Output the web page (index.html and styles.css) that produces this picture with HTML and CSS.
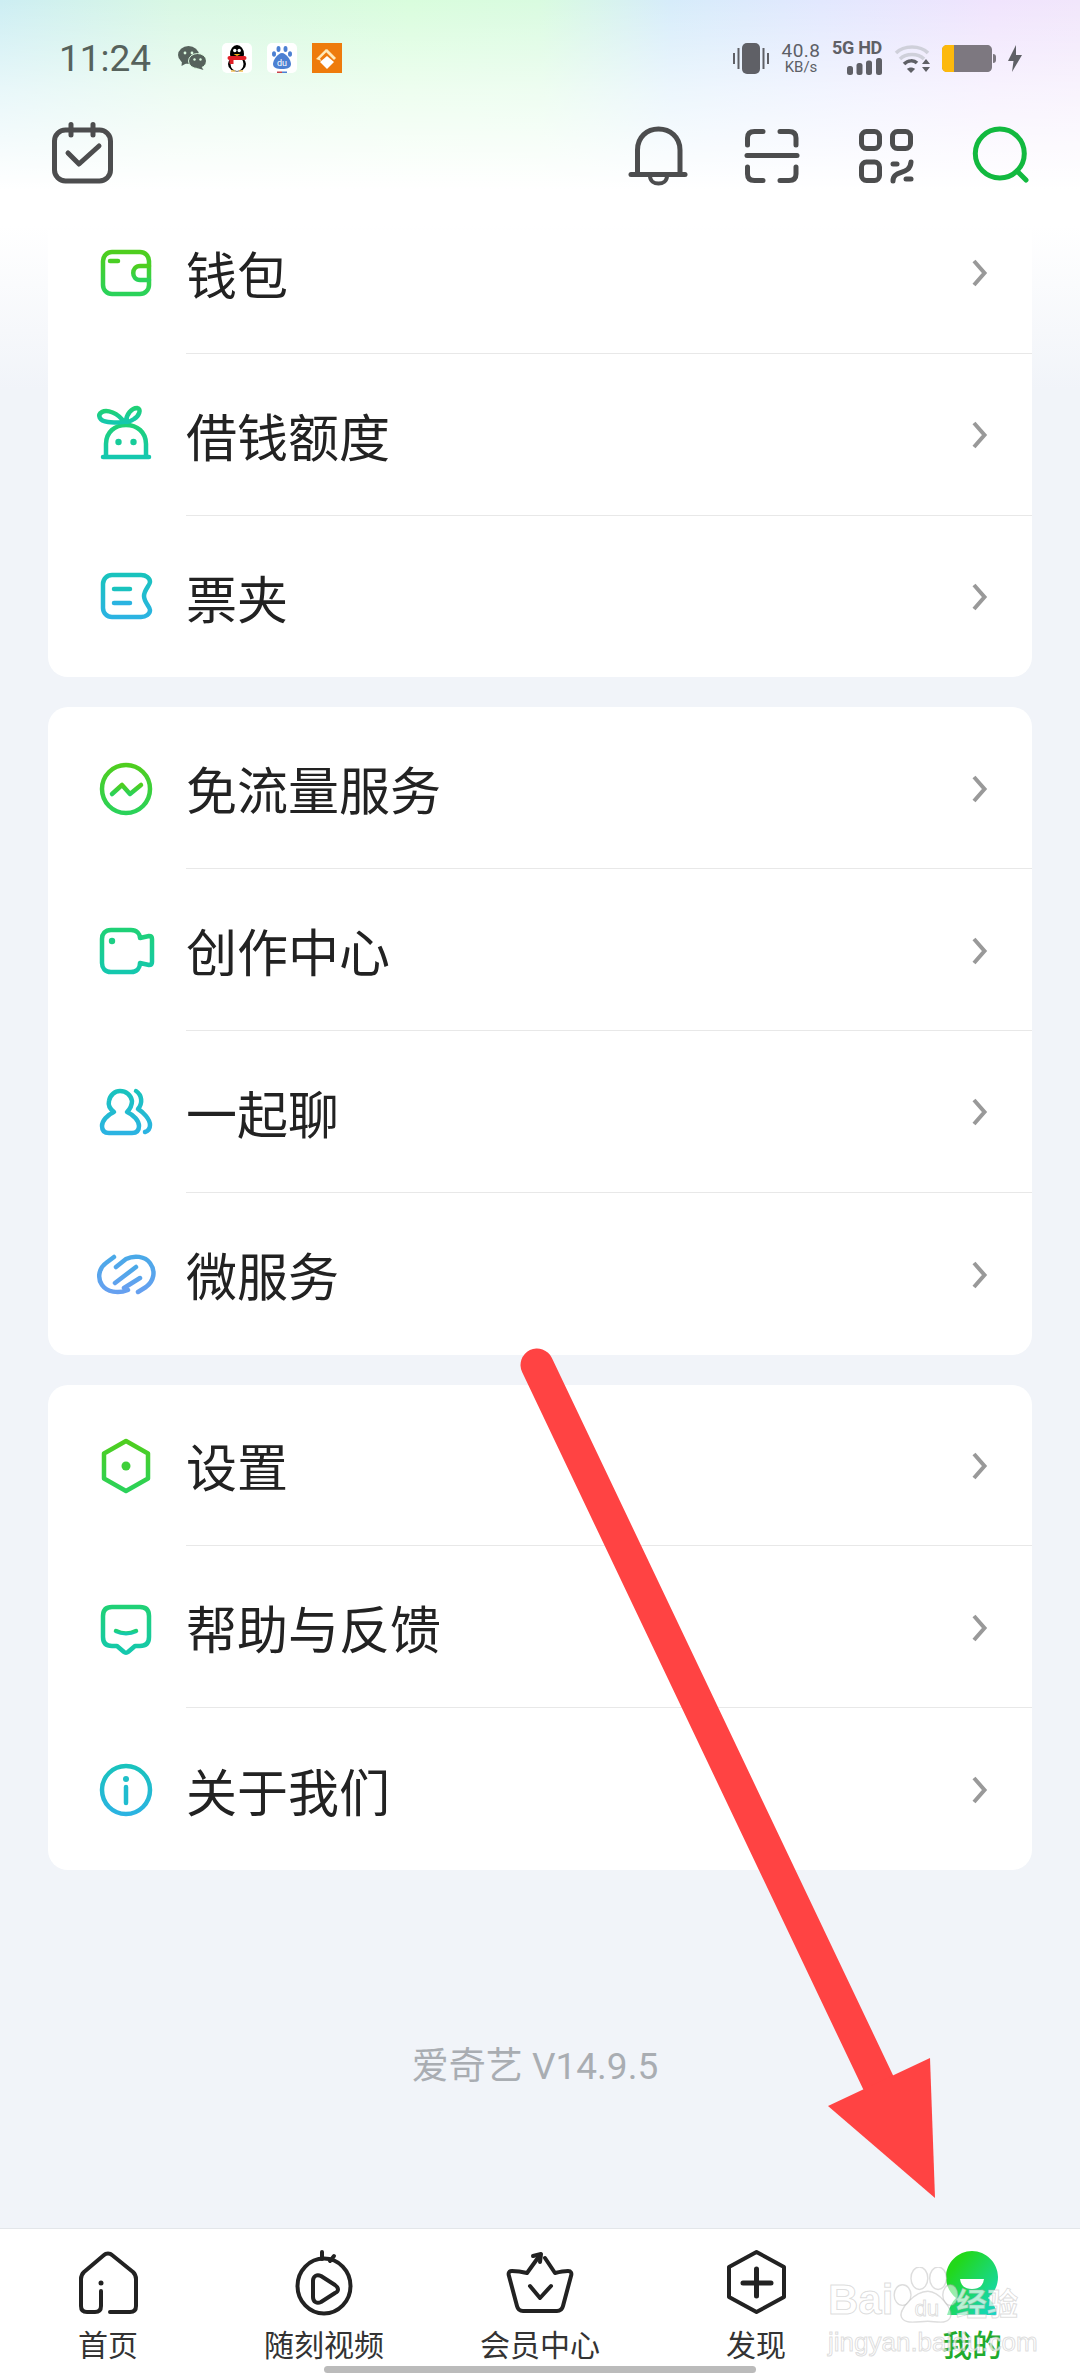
FILE: index.html
```html
<!DOCTYPE html>
<html lang="zh-CN">

<head>
    <meta charset="UTF-8">
    <meta name="viewport" content="width=device-width, initial-scale=1.0">
    <title>爱奇艺 - 我的</title>
    <link rel="stylesheet" href="styles.css">
</head>

<body>
    <svg class="defs" width="0" height="0">
        <defs>
            <linearGradient id="g-green" x1="0" y1="0" x2="0" y2="1">
                <stop offset="0" stop-color="#4fce1e" />
                <stop offset="1" stop-color="#2ad25a" />
            </linearGradient>
            <linearGradient id="g-teal" x1="0" y1="0" x2="0" y2="1">
                <stop offset="0" stop-color="#1fd176" />
                <stop offset="1" stop-color="#14c8ae" />
            </linearGradient>
            <linearGradient id="g-cyan" x1="0" y1="0" x2="0" y2="1">
                <stop offset="0" stop-color="#19c3bd" />
                <stop offset="1" stop-color="#2bb3e2" />
            </linearGradient>
            <linearGradient id="g-blue" x1="0" y1="0" x2="0" y2="1">
                <stop offset="0" stop-color="#4aa9e8" />
                <stop offset="1" stop-color="#66a0f0" />
            </linearGradient>
            <linearGradient id="g-mine" x1="0" y1="0" x2="1" y2="1">
                <stop offset="0.2" stop-color="#22d81a" />
                <stop offset="1" stop-color="#12d8d0" />
            </linearGradient>
        </defs>
    </svg>

    <div class="app">
        <header class="header">
            <div class="status-bar">
                <span class="time">11:24</span>
                <div class="notify-icons">
                    <svg class="wechat" width="28" height="24" viewBox="0 0 28 24">
                        <ellipse cx="10.5" cy="9" rx="10.5" ry="9" fill="#56625c" />
                        <path d="M4 15 L3.5 20 L9 17Z" fill="#56625c" />
                        <ellipse cx="19.5" cy="15" rx="9" ry="7.5" fill="#56625c" stroke="#dcfbe0" stroke-width="1" />
                        <path d="M23 20 L25.5 24 L19 22Z" fill="#56625c" />
                        <circle cx="7" cy="7" r="1.4" fill="#dcfbe0" />
                        <circle cx="14" cy="7" r="1.4" fill="#dcfbe0" />
                        <circle cx="16.5" cy="13.5" r="1.2" fill="#dcfbe0" />
                        <circle cx="22.5" cy="13.5" r="1.2" fill="#dcfbe0" />
                    </svg>
                    <svg width="30" height="30" viewBox="0 0 30 30">
                        <rect width="30" height="30" rx="5" fill="#fff" />
                        <ellipse cx="15" cy="11" rx="7" ry="9" fill="#000" />
                        <ellipse cx="15" cy="21" rx="9" ry="7.5" fill="#000" />
                        <ellipse cx="15" cy="21" rx="6.5" ry="7" fill="#fff" />
                        <rect x="5.5" y="13" width="19" height="4" rx="2" fill="#e01f26" />
                        <rect x="7.5" y="15" width="4" height="6" fill="#e01f26" />
                        <circle cx="12.8" cy="7.5" r="1.7" fill="#fff" />
                        <circle cx="17.2" cy="7.5" r="1.7" fill="#fff" />
                        <path d="M11.5 11 H18.5 L15 13Z" fill="#f6b21a" />
                        <path d="M9 28 H13 M17 28 H21" stroke="#f3c45a" stroke-width="1.5" />
                    </svg>
                    <svg width="30" height="30" viewBox="0 0 30 30">
                        <rect width="30" height="30" rx="5" fill="#fff" />
                        <ellipse cx="11.5" cy="6" rx="2" ry="3" fill="#4c80d2" />
                        <ellipse cx="18.5" cy="6" rx="2" ry="3" fill="#4c80d2" />
                        <ellipse cx="7" cy="11" rx="2" ry="2.8" fill="#4c80d2" />
                        <ellipse cx="23" cy="11" rx="2" ry="2.8" fill="#4c80d2" />
                        <path d="M15 10 C19 10 24 17 24 21 C24 25 20 26 15 26 C10 26 6 25 6 21 C6 17 11 10 15 10Z" fill="#4c80d2" />
                        <text class="du-mini" x="15" y="23" text-anchor="middle">du</text>
                        <rect x="10" y="28.5" width="5" height="1.5" fill="#c9434a" />
                        <rect x="15" y="28.5" width="5" height="1.5" fill="#4c80d2" />
                    </svg>
                    <svg width="30" height="30" viewBox="0 0 30 30">
                        <rect width="30" height="30" fill="#ee7b0c" />
                        <path d="M4 16 L14 6 L15.5 8 L8 15.5 L9.5 18Z" fill="#ffe9b8" />
                        <path d="M15 6 L24 15 L22 17 L13 8Z" fill="#ffe9b8" />
                        <path d="M15 13 L22 19 L15 26 L8 19Z" fill="#fff" />
                    </svg>
                </div>
                <div class="sys-icons">
                    <svg width="36" height="31" viewBox="0 0 36 31" fill="#5f6066">
                        <rect x="9" width="18" height="31" rx="5" />
                        <rect x="4.5" y="5" width="2" height="21" />
                        <rect x="0" y="10" width="2" height="11" />
                        <rect x="29.5" y="5" width="2" height="21" />
                        <rect x="34" y="10" width="2" height="11" />
                    </svg>
                    <div class="speed">
                        <span class="speed-num">40.8</span>
                        <span class="speed-unit">KB/s</span>
                    </div>
                    <div class="network">
                        <span class="net-label">5G HD</span>
                        <svg width="35" height="17" viewBox="0 0 35 17" fill="#5f6066">
                            <rect x="0" y="8" width="6" height="9" rx="2.5" />
                            <rect x="9.5" y="5" width="6" height="12" rx="2.5" />
                            <rect x="19" y="2.5" width="6" height="14.5" rx="2.5" />
                            <rect x="29" y="0" width="6" height="17" rx="2.5" />
                        </svg>
                    </div>
                    <svg width="36" height="30" viewBox="0 0 36 30" fill="none">
                        <path d="M2 10 C10 2 26 2 34 10" stroke="#cfd0da" stroke-width="3.5" />
                        <path d="M6 16 C12 10 24 10 30 16" stroke="#cfd0da" stroke-width="3.5" />
                        <path d="M10 21 C14 17 20 17 23 20" stroke="#5f6066" stroke-width="3.5" />
                        <path d="M13 26 L17 30 L21 26 C19 24 15 24 13 26Z" fill="#5f6066" />
                        <path d="M28 21 L32 16 L36 21Z M28 24 H36 L32 29Z" fill="#5f6066" />
                    </svg>
                    <svg width="54" height="27" viewBox="0 0 54 27">
                        <path d="M6 0 H45 C48 0 50 2 50 5 V22 C50 25 48 27 45 27 H6 C3 27 0 25 0 22 V5 C0 2 3 0 6 0Z" fill="#7d7880" />
                        <path d="M5 0 H12 V27 H5 C2 27 0 25 0 22 V5 C0 2 2 0 5 0Z" fill="#fdb90c" />
                        <path d="M51 9 C53 9 54 10 54 12 V15 C54 17 53 18 51 18Z" fill="#7d7880" />
                    </svg>
                    <svg width="14" height="27" viewBox="0 0 14 27" fill="#5f6066">
                        <path d="M8 0 L0 16 H5.5 L4 27 L14 10 H8Z" />
                    </svg>
                </div>
            </div>

            <div class="toolbar">
                <svg class="tool-icon" viewBox="0 0 60 60">
                    <rect x="2.5" y="5" width="56" height="51" rx="11" />
                    <path d="M19 -0.5 V10 M41 -0.5 V10" />
                    <path d="M16 28 L27 39 L47 21" />
                </svg>
                <div class="tool-right">
                    <svg class="tool-icon" viewBox="0 0 60 60">
                        <path d="M9.5 49 V25 C9.5 12 19 4 30.5 4 C42 4 52 12 52 25 V49" />
                        <path d="M3 49.5 H57" />
                        <path d="M22 51 C22 61 39 61 39 51" stroke-width="4" />
                    </svg>
                    <svg class="tool-icon" viewBox="0 0 60 60">
                        <path d="M5.5 20 V13 Q5.5 6.5 12.5 6.5 H21" />
                        <path d="M38 6.5 H47 Q54 6.5 54 13 V20" />
                        <path d="M5.5 42 V49 Q5.5 55.5 12.5 55.5 H21" />
                        <path d="M38 55.5 H47 Q54 55.5 54 49 V42" />
                        <path d="M5 30.5 H55" />
                    </svg>
                    <svg class="tool-icon" viewBox="0 0 60 60">
                        <rect x="5.5" y="6.5" width="18" height="17" rx="5" />
                        <rect x="36.5" y="6.5" width="18" height="17" rx="5" />
                        <rect x="5.5" y="37" width="18" height="18.5" rx="5" />
                        <path d="M37 39 H41" />
                        <path d="M37 56 C37 44 54 51 55 37" />
                        <path d="M50 54 H55" />
                    </svg>
                    <svg class="tool-icon search" viewBox="0 0 60 60">
                        <circle cx="29.8" cy="28.5" r="24.5" />
                        <path d="M47 46 L56 55" />
                    </svg>
                </div>
            </div>
        </header>

        <main class="content">
            <section class="card card-first">
                <div class="row">
                    <svg class="row-icon" viewBox="0 0 60 60" stroke="url(#g-green)">
                        <rect x="7" y="8" width="46" height="42" rx="9" />
                        <path d="M14 17 H22" stroke="#4acf24" />
                        <path d="M53 22 H44 C35 22 35 36 44 36 H53" />
                    </svg>
                    <div class="row-body">
                        <span class="row-title">钱包</span>
                        <svg class="chevron" viewBox="0 0 20 32"><path d="M4 4 L14.5 16 L4 28" /></svg>
                    </div>
                </div>
                <div class="row">
                    <svg class="row-icon" viewBox="0 0 60 60" stroke="url(#g-teal)">
                        <path d="M10 50 V38 C10 26 19 19 30 19 C41 19 50 26 50 38 V50" />
                        <path d="M7 51 H53" stroke="#14c8ae" />
                        <path d="M28 16 C22 7 11 3 6 6 C1 9 3 15 12 16 C18 17 24 16 28 16Z" />
                        <path d="M30 16 C30 8 36 2 41 2 C46 3 43 10 38 13 C35 15 32 16 30 16Z" />
                        <circle class="dot" cx="22.5" cy="36" r="3.2" fill="#17cc9a" />
                        <circle class="dot" cx="37.5" cy="36" r="3.2" fill="#17cc9a" />
                    </svg>
                    <div class="row-body">
                        <span class="row-title">借钱额度</span>
                        <svg class="chevron" viewBox="0 0 20 32"><path d="M4 4 L14.5 16 L4 28" /></svg>
                    </div>
                </div>
                <div class="row">
                    <svg class="row-icon" viewBox="0 0 60 60" stroke="url(#g-cyan)">
                        <path d="M16 8 H45 C50 8 54 11 54 15 C54 18 48 23 48 29 C48 35 54 40 54 43 C54 47 50 50 45 50 H16 C11 50 7 46 7 41 V17 C7 12 11 8 16 8Z" />
                        <path d="M18 22 H34 M18 36 H34" />
                    </svg>
                    <div class="row-body">
                        <span class="row-title">票夹</span>
                        <svg class="chevron" viewBox="0 0 20 32"><path d="M4 4 L14.5 16 L4 28" /></svg>
                    </div>
                </div>
            </section>

            <section class="card">
                <div class="row">
                    <svg class="row-icon" viewBox="0 0 60 60" stroke="url(#g-green)">
                        <circle cx="30" cy="30" r="24" />
                        <path d="M16 35 L26 26 L34 35 L45 26" />
                    </svg>
                    <div class="row-body">
                        <span class="row-title">免流量服务</span>
                        <svg class="chevron" viewBox="0 0 20 32"><path d="M4 4 L14.5 16 L4 28" /></svg>
                    </div>
                </div>
                <div class="row">
                    <svg class="row-icon" viewBox="0 0 60 60" stroke="url(#g-teal)">
                        <path d="M15 9 H35 C41 9 44 13 44 17 L53 15 C55 15 56 16 56 18 V41 C56 43 55 44 53 44 L44 42 C44 47 41 51 35 51 H15 C9 51 6 47 6 42 V18 C6 13 9 9 15 9Z" />
                        <circle class="dot" cx="16" cy="20" r="3.2" fill="#1dcf85" />
                    </svg>
                    <div class="row-body">
                        <span class="row-title">创作中心</span>
                        <svg class="chevron" viewBox="0 0 20 32"><path d="M4 4 L14.5 16 L4 28" /></svg>
                    </div>
                </div>
                <div class="row">
                    <svg class="row-icon" viewBox="0 0 60 60" stroke="url(#g-cyan)">
                        <path d="M18 29 C14 26 12 22 13 18 C14 12 19 8 24 8 C30 8 35 12 36 18 C36 22 34 26 31 29 C38 32 43 38 43 43 C43 48 40 50 36 50 H13 C9 50 6 48 6 43 C6 38 11 32 18 29Z" />
                        <path d="M40 8 C46 12 47 20 42 26 C47 29 54 36 54 42 C54 46 52 48 49 49" />
                    </svg>
                    <div class="row-body">
                        <span class="row-title">一起聊</span>
                        <svg class="chevron" viewBox="0 0 20 32"><path d="M4 4 L14.5 16 L4 28" /></svg>
                    </div>
                </div>
                <div class="row">
                    <svg class="row-icon" viewBox="0 0 60 60" stroke="url(#g-blue)">
                        <path d="M18 12 L10 18 C3 23 1 33 6 40 C11 47 22 49 32 45" />
                        <path d="M42 47 L50 42 C58 36 60 26 54 18 C49 11 38 10 30 14 L20 22" />
                        <path d="M19 38 L40 22 M28 43 L44 33" />
                    </svg>
                    <div class="row-body">
                        <span class="row-title">微服务</span>
                        <svg class="chevron" viewBox="0 0 20 32"><path d="M4 4 L14.5 16 L4 28" /></svg>
                    </div>
                </div>
            </section>

            <section class="card">
                <div class="row">
                    <svg class="row-icon" viewBox="0 0 60 60" stroke="url(#g-green)">
                        <path d="M30 5 L52 17.5 V42.5 L30 55 L8 42.5 V17.5Z" />
                        <circle class="dot" cx="30" cy="30" r="4.5" fill="#3fcf3a" />
                    </svg>
                    <div class="row-body">
                        <span class="row-title">设置</span>
                        <svg class="chevron" viewBox="0 0 20 32"><path d="M4 4 L14.5 16 L4 28" /></svg>
                    </div>
                </div>
                <div class="row">
                    <svg class="row-icon" viewBox="0 0 60 60" stroke="url(#g-teal)">
                        <path d="M16 9 H44 C50 9 53 12 53 18 V39 C53 45 50 48 44 48 H39 L32 54 C31 55 29 55 28 54 L21 48 H16 C10 48 7 45 7 39 V18 C7 12 10 9 16 9Z" />
                        <path d="M20 33 C26 36 34 36 40 33" />
                    </svg>
                    <div class="row-body">
                        <span class="row-title">帮助与反馈</span>
                        <svg class="chevron" viewBox="0 0 20 32"><path d="M4 4 L14.5 16 L4 28" /></svg>
                    </div>
                </div>
                <div class="row">
                    <svg class="row-icon" viewBox="0 0 60 60" stroke="url(#g-cyan)">
                        <circle cx="30" cy="30" r="24" />
                        <path d="M30 27 V43" stroke="#1fbccf" />
                        <circle class="dot" cx="30" cy="19" r="3" fill="#1fc0c8" />
                    </svg>
                    <div class="row-body">
                        <span class="row-title">关于我们</span>
                        <svg class="chevron" viewBox="0 0 20 32"><path d="M4 4 L14.5 16 L4 28" /></svg>
                    </div>
                </div>
            </section>

            <p class="version">爱奇艺 V14.9.5</p>
        </main>

        <nav class="tabbar">
            <div class="tab">
                <svg class="tab-icon" viewBox="0 0 70 70">
                    <path d="M28 43 V58 C28 62 26 64 22 64 H14 C10 64 8 62 8 58 V31 C8 28 9 26 11 24 L31 7 C33 5 37 5 39 7 L60 24 C62 26 63 28 63 31 V58 C63 62 61 64 57 64 H37" />
                    <circle class="dot" cx="28" cy="35" r="2.5" fill="#222" />
                </svg>
                <span class="tab-label">首页</span>
            </div>
            <div class="tab">
                <svg class="tab-icon" viewBox="0 0 70 70">
                    <ellipse cx="35" cy="38" rx="26.5" ry="27.5" />
                    <path d="M33 4 L33 11 M45 8 L41 13" />
                    <path d="M24 33 C24 28 28 26 32 28 L46 37 C50 40 50 43 46 45 L32 54 C28 56 24 54 24 49Z" />
                </svg>
                <span class="tab-label">随刻视频</span>
            </div>
            <div class="tab">
                <svg class="tab-icon" viewBox="0 0 70 70">
                    <path d="M35 7 L22 25 C18 24 12 23 7 23 C4 23 3 25 4 28 L12 58 C13 62 15 63 18 63 H52 C55 63 57 62 58 58 L66 28 C67 25 66 23 63 23 C58 23 54 24 50 25 L40 10" />
                    <path d="M28 8 L36 6 L35 14" />
                    <path d="M25 38 L35 50 L46 38" />
                </svg>
                <span class="tab-label">会员中心</span>
            </div>
            <div class="tab">
                <svg class="tab-icon" viewBox="0 0 70 70">
                    <path d="M35.5 4 L63 19 V49 L35.5 64 L8 49 V19Z" />
                    <path class="plus" d="M22 35 H50 M35.5 21 V48" />
                </svg>
                <span class="tab-label">发现</span>
            </div>
            <div class="tab tab-active">
                <svg class="tab-icon mine" viewBox="0 0 70 70">
                    <path d="M35 3 C49 3 61 15 61 29 C61 38 57 45 51 50 C56 54 59 60 60 67 H10 C12 60 15 54 19 50 C13 45 9 38 9 29 C9 15 21 3 35 3Z" fill="url(#g-mine)" />
                    <path d="M23 31 H47 C46 38 42 41 35 41 C28 41 24 38 23 31Z" fill="#fff" />
                </svg>
                <span class="tab-label">我的</span>
            </div>
            <div class="home-bar"></div>
        </nav>

        <svg class="arrow" width="450" height="880" viewBox="500 1330 450 880">
            <path d="M537 1365 L878 2082" stroke="#ff4343" stroke-width="33" stroke-linecap="round" fill="none" />
            <path d="M828 2106 L930 2058 L935 2198Z" fill="#ff4343" />
        </svg>

        <div class="watermark">
            <div class="wm-logo">
                <span class="wm-bai">Bai</span>
                <svg class="wm-paw" viewBox="0 0 70 62">
                    <ellipse cx="29" cy="12" rx="9" ry="12" />
                    <ellipse cx="49" cy="12" rx="9" ry="12" />
                    <ellipse cx="11" cy="30" rx="9" ry="11" />
                    <ellipse cx="62" cy="30" rx="8" ry="11" />
                    <path d="M38 26 C50 26 66 46 62 54 C58 62 46 58 38 58 C28 58 14 62 10 54 C6 46 24 26 38 26Z" />
                    <text x="37" y="52" text-anchor="middle">du</text>
                </svg>
                <span class="wm-jy">经验</span>
            </div>
            <div class="wm-url">jingyan.baidu.com</div>
        </div>
    </div>
</body>

</html>
```

FILE: styles.css
```css
* {
    box-sizing: border-box;
}

html,
body {
    margin: 0;
    padding: 0;
}

body {
    font-family: Roboto, "Noto Sans CJK SC", sans-serif;
    background-color: #f1f4f9;
}

.defs {
    position: absolute;
}

.app {
    position: relative;
    width: 1080px;
    height: 2376px;
    display: flex;
    flex-direction: column;
    overflow: hidden;
    background:
        linear-gradient(180deg, rgba(255, 255, 255, 0) 0, rgba(255, 255, 255, 0.55) 90px, #ffffff 190px, #ffffff 225px, #f1f4f9 390px),
        linear-gradient(90deg, #cdeef3 0, #d8f7e4 16%, #d9fddd 38%, #d9fbe0 50%, #d6ecfa 62%, #e2e8fe 76%, #f0e4fd 92%, #f1e6fb 100%);
}

/* status bar + top icons */
.header {
    height: 230px;
    flex-shrink: 0;
}

.status-bar {
    height: 116px;
    display: flex;
    align-items: center;
    padding: 0 58px 0 59px;
}

.time {
    font-size: 37px;
    color: #56625c;
    width: 119px;
}

.notify-icons {
    display: flex;
    align-items: center;
    gap: 15px;
}

.wechat {
    margin-right: 1px;
}

.du-mini {
    font-family: Roboto, sans-serif;
    font-size: 9px;
    fill: #fff;
}

.sys-icons {
    margin-left: auto;
    display: flex;
    align-items: center;
    gap: 12px;
}

.speed {
    width: 40px;
    display: flex;
    flex-direction: column;
    align-items: center;
    color: #5d5f66;
}

.speed-num {
    font-size: 19px;
    line-height: 18px;
    letter-spacing: 0.5px;
}

.speed-unit {
    font-size: 15px;
    line-height: 14px;
}

.network {
    width: 49px;
    display: flex;
    flex-direction: column;
    align-items: flex-end;
    gap: 3px;
}

.net-label {
    font-size: 18px;
    line-height: 14px;
    font-weight: 700;
    letter-spacing: -0.3px;
    color: #5f6066;
    white-space: nowrap;
}

.toolbar {
    display: flex;
    justify-content: space-between;
    padding: 9px 50px 0 52px;
}

.tool-right {
    display: flex;
    gap: 54px;
}

.tool-icon {
    width: 60px;
    height: 60px;
    overflow: visible;
    fill: none;
    stroke: #4c4d4e;
    stroke-width: 5;
    stroke-linecap: round;
    stroke-linejoin: round;
}

.tool-icon.search {
    stroke: #12b93f;
}

/* menu cards */
.content {
    flex: 1;
    min-height: 0;
    overflow: hidden;
    padding: 0 48px;
}

.card {
    background: #ffffff;
    border-radius: 20px;
    margin-bottom: 30px;
}

.card-first {
    margin-top: -38px;
}

.row {
    height: 161.8px;
    display: flex;
    align-items: center;
    padding-left: 48px;
}

.row-icon {
    width: 60px;
    height: 60px;
    margin-top: 2px;
    flex-shrink: 0;
    overflow: visible;
    fill: none;
    stroke-width: 4.5;
    stroke-linecap: round;
    stroke-linejoin: round;
}

.row-icon .dot {
    stroke: none;
}

.row-body {
    flex: 1;
    height: 100%;
    margin-left: 30px;
    padding-right: 42px;
    display: flex;
    align-items: center;
    justify-content: space-between;
    border-bottom: 1px solid #e8e8e8;
}

.row:last-child .row-body {
    border-bottom: none;
}

.row-title {
    font-family: "Noto Sans CJK SC", sans-serif;
    font-size: 51px;
    line-height: 60px;
    margin-top: 1px;
    color: #222222;
}

.chevron {
    width: 20px;
    height: 32px;
    margin-top: 2px;
    fill: none;
    stroke: #999999;
    stroke-width: 4;
}

.version {
    margin: 172px 0 0;
    padding-right: 10px;
    text-align: center;
    font-size: 37px;
    line-height: 50px;
    color: #a9adb2;
}

/* bottom tabs */
.tabbar {
    position: relative;
    height: 148px;
    flex-shrink: 0;
    display: flex;
    padding-top: 19px;
    background: #ffffff;
    border-top: 1px solid #e3e6ea;
}

.tab {
    flex: 1;
    display: flex;
    flex-direction: column;
    align-items: center;
}

.tab-icon {
    width: 70px;
    height: 70px;
    overflow: visible;
    fill: none;
    stroke: #222222;
    stroke-width: 4;
    stroke-linecap: round;
    stroke-linejoin: round;
}

.tab-icon .dot {
    stroke: none;
}

.tab-icon .plus {
    stroke-width: 5;
}

.tab-icon.mine {
    stroke: none;
}

.tab-label {
    margin-top: 7px;
    font-family: "Noto Sans CJK SC", sans-serif;
    font-size: 30px;
    line-height: 36px;
    color: #333333;
}

.tab-active .tab-label {
    color: #1fab2e;
    font-weight: 500;
}

.home-bar {
    position: absolute;
    left: 324px;
    bottom: 3px;
    width: 432px;
    height: 7px;
    border-radius: 4px;
    background: #bbbbbb;
}

/* annotation drawn on top of the shot */
.arrow {
    position: absolute;
    left: 500px;
    top: 1330px;
}

.watermark {
    position: absolute;
    left: 828px;
    top: 2267px;
    width: 200px;
    font-family: "Liberation Sans", "Noto Sans CJK SC", sans-serif;
    color: rgba(255, 255, 255, 0.7);
    -webkit-text-stroke: 1px rgba(170, 170, 170, 0.4);
}

.wm-logo {
    height: 58px;
    display: flex;
    align-items: flex-end;
}

.wm-bai {
    width: 62px;
    font-size: 42px;
    line-height: 50px;
    font-weight: 700;
}

.wm-paw {
    width: 70px;
    height: 58px;
    flex-shrink: 0;
    fill: rgba(255, 255, 255, 0.55);
    stroke: rgba(170, 170, 170, 0.4);
    stroke-width: 1.5;
}

.wm-paw text {
    font-family: "Liberation Sans", sans-serif;
    font-size: 24px;
    stroke-width: 1;
}

.wm-jy {
    margin-left: -4px;
    font-family: "Noto Sans CJK SC", sans-serif;
    font-size: 31px;
    line-height: 46px;
    font-weight: 700;
    white-space: nowrap;
}

.wm-url {
    margin-top: 3px;
    font-size: 26px;
    line-height: 28px;
    white-space: nowrap;
}
```
